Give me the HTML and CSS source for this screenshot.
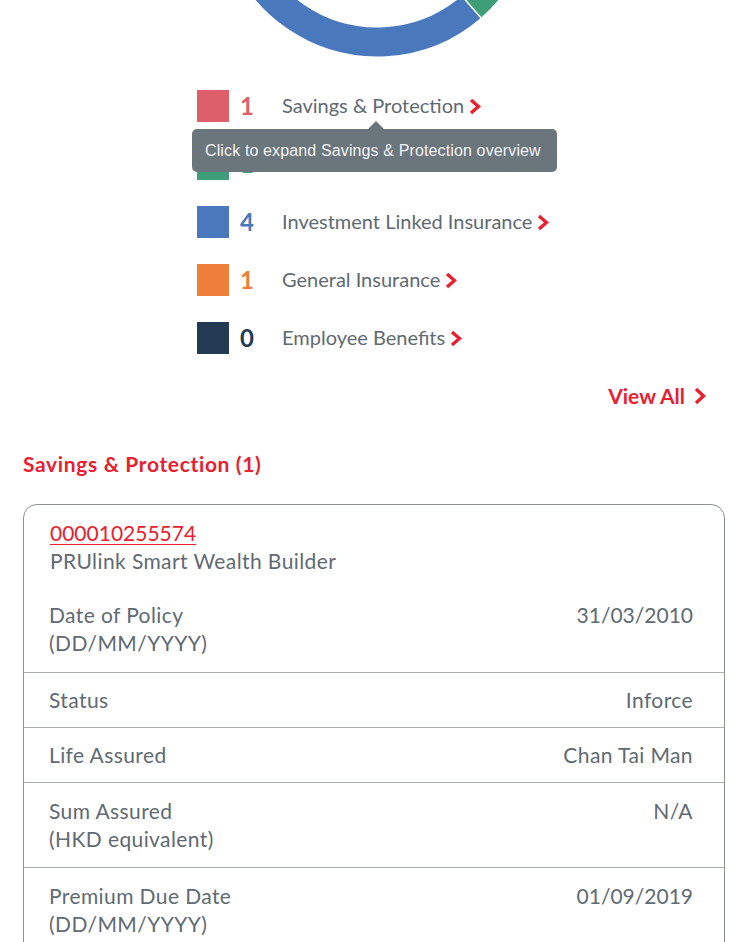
FILE: index.html
```html
<!DOCTYPE html>
<html>
<head>
<meta charset="utf-8">
<link rel="stylesheet" href="styles.css">
</head>
<body>
<div class="page">
  <svg class="donut" width="750" height="58" viewBox="0 0 750 58">
    <path d="M 518.8 -77 A 144 144 0 0 1 471.5 6.7" fill="none" stroke="#3d9e77" stroke-width="29"/>
    <path d="M 471.5 6.7 A 144 144 0 0 1 241.7 -151" fill="none" stroke="#4a78bd" stroke-width="29"/>
    <line x1="461" y1="-5" x2="482" y2="19" stroke="#ffffff" stroke-width="1.5"/>
  </svg>

  <ul class="legend">
    <li class="legend-row">
      <span class="swatch sw-red"></span>
      <span class="count c-red">1</span>
      <span class="label">Savings &amp; Protection</span>
      <svg class="chev" width="12" height="17" viewBox="0 0 12 17"><polyline points="2,2 9.5,8.5 2,15" fill="none" stroke="#e8202f" stroke-width="3.4"/></svg>
      <div class="tooltip">
        <span class="tip-arrow"></span>
        Click to expand Savings &amp; Protection overview
      </div>
    </li>
    <li class="legend-row">
      <span class="swatch sw-green"></span>
      <span class="count c-green">1</span>
      <span class="label">Medical &amp; Critical Illness</span>
      <svg class="chev" width="12" height="17" viewBox="0 0 12 17"><polyline points="2,2 9.5,8.5 2,15" fill="none" stroke="#e8202f" stroke-width="3.4"/></svg>
    </li>
    <li class="legend-row">
      <span class="swatch sw-blue"></span>
      <span class="count c-blue">4</span>
      <span class="label">Investment Linked Insurance</span>
      <svg class="chev" width="12" height="17" viewBox="0 0 12 17"><polyline points="2,2 9.5,8.5 2,15" fill="none" stroke="#e8202f" stroke-width="3.4"/></svg>
    </li>
    <li class="legend-row">
      <span class="swatch sw-orange"></span>
      <span class="count c-orange">1</span>
      <span class="label">General Insurance</span>
      <svg class="chev" width="12" height="17" viewBox="0 0 12 17"><polyline points="2,2 9.5,8.5 2,15" fill="none" stroke="#e8202f" stroke-width="3.4"/></svg>
    </li>
    <li class="legend-row">
      <span class="swatch sw-navy"></span>
      <span class="count c-navy">0</span>
      <span class="label">Employee Benefits</span>
      <svg class="chev" width="12" height="17" viewBox="0 0 12 17"><polyline points="2,2 9.5,8.5 2,15" fill="none" stroke="#e8202f" stroke-width="3.4"/></svg>
    </li>
  </ul>

  <div class="view-all-wrap">
    <a class="view-all">View All
      <svg class="chev" width="12" height="18" viewBox="0 0 12 18"><polyline points="2,2 9.5,9 2,16" fill="none" stroke="#e8202f" stroke-width="3.4"/></svg>
    </a>
  </div>

  <h2 class="section-title">Savings &amp; Protection (1)</h2>

  <div class="card">
    <div class="card-head">
      <a class="policy-no">000010255574</a>
      <div class="policy-name">PRUlink Smart Wealth Builder</div>
      <div class="row row-first">
        <div class="row-label">Date of Policy<br>(DD/MM/YYYY)</div>
        <div class="row-value num">31/03/2010</div>
      </div>
    </div>
    <div class="row">
      <div class="row-label">Status</div>
      <div class="row-value">Inforce</div>
    </div>
    <div class="row">
      <div class="row-label">Life Assured</div>
      <div class="row-value">Chan Tai Man</div>
    </div>
    <div class="row row-two">
      <div class="row-label">Sum Assured<br>(HKD equivalent)</div>
      <div class="row-value">N/A</div>
    </div>
    <div class="row row-two">
      <div class="row-label">Premium Due Date<br>(DD/MM/YYYY)</div>
      <div class="row-value num">01/09/2019</div>
    </div>
  </div>
</div>
</body>
</html>
```

FILE: styles.css
```css
* { box-sizing: border-box; }
html, body { margin: 0; padding: 0; background: #ffffff; }
body { font-family: Lato, "Open Sans", sans-serif; color: #606a72; }
.page { width: 750px; height: 942px; overflow: hidden; }

.donut { display: block; }

.legend {
  list-style: none;
  margin: 32px 0 0 197px;
  padding: 0;
  display: flex;
  flex-direction: column;
  gap: 26px;
}
.legend-row {
  position: relative;
  display: flex;
  align-items: center;
  height: 32px;
}
.swatch { width: 32px; height: 32px; flex: none; }
.sw-red { background: #dd5f6b; }
.sw-green { background: #3d9e77; }
.sw-blue { background: #4a78bd; }
.sw-orange { background: #ed7e3b; }
.sw-navy { background: #243a52; }

.count {
  width: 53px;
  padding-left: 11px;
  font-size: 24px;
  font-weight: 700;
  line-height: 32px;
}
.c-red { color: #dd5f6b; }
.c-green { color: #3d9e77; }
.c-blue { color: #4a78bd; }
.c-orange { color: #ed7e3b; }
.c-navy { color: #243a52; }

.label {
  font-size: 20px;
  line-height: 30px;
  color: #606a72;
  margin-right: 5px;
  margin-top: -2px;
}
.chev { display: block; flex: none; }

.tooltip {
  position: absolute;
  left: -5px;
  top: 39px;
  width: 365px;
  height: 43px;
  background: #6b757c;
  border-radius: 5px;
  color: #f2f4f5;
  font-family: "Liberation Sans", Arial, sans-serif;
  font-size: 16px;
  letter-spacing: 0.13px;
  line-height: 44px;
  padding-left: 13px;
  white-space: nowrap;
  z-index: 2;
}
.tip-arrow {
  position: absolute;
  left: 176px;
  top: -8px;
  width: 0;
  height: 0;
  border-left: 8px solid transparent;
  border-right: 8px solid transparent;
  border-bottom: 8px solid #6b757c;
}

.view-all-wrap {
  display: flex;
  justify-content: flex-end;
  padding-right: 44px;
  margin-top: 29px;
}
.view-all {
  display: flex;
  align-items: center;
  gap: 9px;
  color: #e8202f;
  font-size: 21px;
  font-weight: 700;
  line-height: 26px;
}

.section-title {
  margin: 42px 0 0 23px;
  color: #e8202f;
  font-size: 21px;
  letter-spacing: 0.65px;
  font-weight: 700;
  line-height: 26px;
}

.card {
  margin: 27px 25px 0 23px;
  border: 1px solid #8a9096;
  border-radius: 14px 14px 0 0;
  height: 480px;
  font-size: 21px;
  letter-spacing: 0.4px;
}
.card-head { padding: 15px 0 0 0; }
.policy-no {
  display: inline-block;
  margin-left: 26px;
  color: #e8202f;
  line-height: 26px;
  letter-spacing: 0;
  text-decoration: underline;
  text-decoration-thickness: 1px;
  text-underline-offset: 3px;
}
.policy-name {
  margin-left: 26px;
  line-height: 30px;
}
.row {
  display: flex;
  justify-content: space-between;
  padding: 13px 31px 13px 25px;
  border-bottom: 1px solid #a8adb2;
  line-height: 28px;
}
.row-first { padding-top: 25px; padding-bottom: 15px; }
.row-two { padding-top: 14px; padding-bottom: 14px; }
.row-value { text-align: right; }
.num { letter-spacing: 0; }
```
